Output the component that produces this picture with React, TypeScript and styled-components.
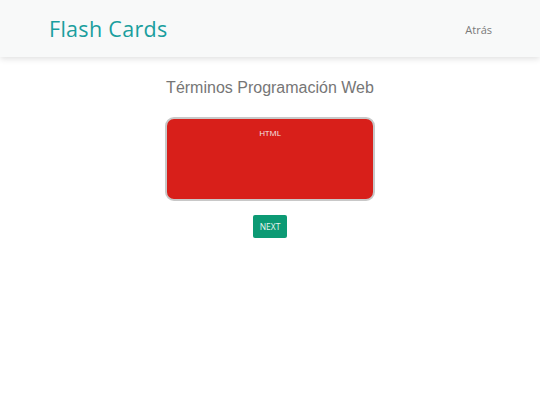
import React, { useState } from 'react'
import styled, { createGlobalStyle } from 'styled-components'

const GlobalStyle = createGlobalStyle`
  html, body {
    margin: 0;
    padding: 0;
    background: #ffffff;
    font-family: 'Open Sans', 'Liberation Sans', sans-serif;
  }
`

const Navbar = styled.nav`
  height: 57px;
  background: #f8f9f9;
  box-shadow: 0 2px 6px rgba(0, 0, 0, 0.12);
  display: flex;
  align-items: center;
  justify-content: space-between;
  padding: 0 48px 0 49px;
`

const Brand = styled.a`
  font-family: 'Open Sans', 'Liberation Sans', sans-serif;
  font-size: 21.5px;
  color: #1a9e9e;
  text-decoration: none;
  letter-spacing: 0.3px;
  margin-top: -1px;
`

const NavLink = styled.a`
  font-family: 'Open Sans', 'Liberation Sans', sans-serif;
  font-size: 11px;
  color: #7a7a7a;
  text-decoration: none;
  margin-top: 1px;
`

const Main = styled.main`
  display: flex;
  flex-direction: column;
  align-items: center;
  padding-top: 20px;
`

const Title = styled.h2`
  margin: 0;
  font-family: 'Liberation Sans', Arial, sans-serif;
  font-weight: 400;
  font-size: 16px;
  line-height: 22px;
  color: #767676;
`

const Card = styled.div<{ $color: string }>`
  margin-top: 18px;
  width: 206px;
  height: 72px;
  background: ${(p) => p.$color};
  border: 2px solid #c8c8c8;
  border-radius: 9px;
  display: flex;
  justify-content: center;
  padding-top: 8px;
  box-sizing: content-box;
`

const CardText = styled.span`
  font-family: 'Open Sans', 'Liberation Sans', sans-serif;
  font-size: 8px;
  color: #f4e8e8;
  line-height: 12px;
`

const NextButton = styled.button`
  margin-top: 14px;
  width: 34px;
  height: 23px;
  padding: 0;
  border: none;
  border-radius: 2px;
  background: #0c9a74;
  color: #e8f5f0;
  font-family: 'Open Sans', 'Liberation Sans', sans-serif;
  font-size: 8.5px;
  cursor: pointer;
`

const terms = ['HTML', 'CSS', 'JavaScript']

const App: React.FC = () => {
  const [index, setIndex] = useState(0)
  return (
    <>
      <GlobalStyle />
      <Navbar>
        <Brand href="#">Flash Cards</Brand>
        <NavLink href="#">Atrás</NavLink>
      </Navbar>
      <Main>
        <Title>Términos Programación Web</Title>
        <Card $color="#d81f1a">
          <CardText>{terms[index]}</CardText>
        </Card>
        <NextButton onClick={() => setIndex((index + 1) % terms.length)}>NEXT</NextButton>
      </Main>
    </>
  )
}

export default App
